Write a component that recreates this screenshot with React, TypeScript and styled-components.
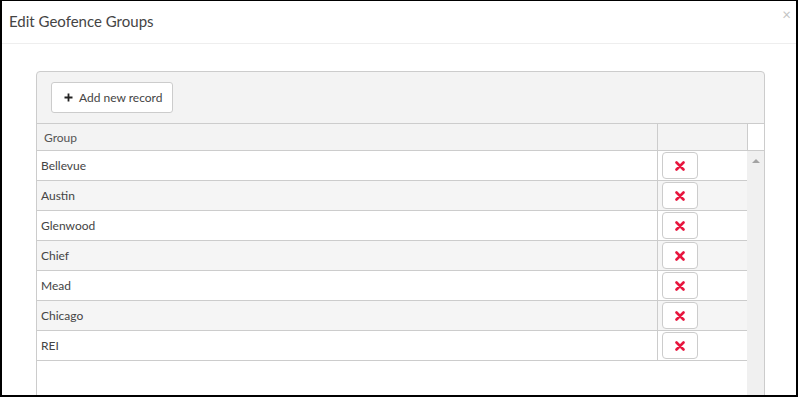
import React from "react";
import styled, { createGlobalStyle } from "styled-components";

const GlobalStyle = createGlobalStyle`
  html, body {
    margin: 0;
    padding: 0;
    background: #fff;
  }
  * {
    box-sizing: border-box;
  }
`;

const Window = styled.div`
  width: 798px;
  height: 397px;
  border: 2px solid #000;
  border-top-width: 1px;
  background: #fff;
  overflow: hidden;
  font-family: Lato, "Liberation Sans", sans-serif;
  color: #333;
`;

const Header = styled.div`
  display: flex;
  align-items: center;
  justify-content: space-between;
  height: 43px;
  padding: 0 5px 2px 7px;
  border-bottom: 1px solid #eeeeee;
`;

const Title = styled.h1`
  margin: 0;
  font-size: 15px;
  font-weight: 400;
  color: #444;
`;

const Close = styled.span`
  font-size: 15px;
  line-height: 1;
  color: #c4c4c4;
  margin-top: -14px;
`;

const Body = styled.div`
  padding: 27px 31px 0 34px;
`;

const Grid = styled.div`
  border: 1px solid #cccccc;
  border-radius: 4px;
  background: #f3f3f3;
  height: 340px;
  overflow: hidden;
`;

const Toolbar = styled.div`
  display: flex;
  padding: 10px 14px;
  border-bottom: 1px solid #cccccc;
`;

const ToolButton = styled.button`
  display: flex;
  align-items: center;
  gap: 6px;
  height: 31px;
  padding: 0 10px 0 12px;
  border: 1px solid #cccccc;
  border-radius: 3px;
  background: #fff;
  font-family: inherit;
  font-size: 12px;
  color: #444;
`;

const HeadRow = styled.div`
  display: flex;
  height: 27px;
  border-bottom: 1px solid #cccccc;
`;

const HeadCell = styled.div<{ $width?: number }>`
  display: flex;
  align-items: center;
  padding-left: 7px;
  font-size: 12px;
  color: #555;
  ${(p) => (p.$width ? `width: ${p.$width}px;` : "flex: 1;")}
  border-right: 1px solid #cccccc;
`;

const ScrollHead = styled.div`
  width: 16px;
  background: #fff;
`;

const Content = styled.div`
  display: flex;
  height: 100%;
  background: #fff;
`;

const Rows = styled.div`
  flex: 1;
`;

const Row = styled.div<{ $alt: boolean }>`
  display: flex;
  height: 30px;
  border-bottom: 1px solid #cccccc;
  background: ${(p) => (p.$alt ? "#f5f5f5" : "#fff")};
`;

const NameCell = styled.div`
  flex: 1;
  display: flex;
  align-items: center;
  padding: 0 0 1px 4px;
  border-right: 1px solid #cccccc;
  font-size: 12px;
  color: #444;
`;

const CommandCell = styled.div`
  width: 89px;
  display: flex;
  align-items: center;
  padding-left: 4px;
`;

const DeleteButton = styled.button`
  width: 36px;
  height: 27px;
  display: flex;
  align-items: center;
  justify-content: center;
  padding: 0;
  border: 1px solid #cccccc;
  border-radius: 4px;
  background: #fff;
`;

const Scrollbar = styled.div`
  width: 17px;
  background: #f0f0f0;
  display: flex;
  justify-content: center;
  padding-top: 8px;
`;

const UpArrow = styled.div`
  width: 0;
  height: 0;
  border-left: 4px solid transparent;
  border-right: 4px solid transparent;
  border-bottom: 4px solid #a3a3a3;
`;

const groups = ["Bellevue", "Austin", "Glenwood", "Chief", "Mead", "Chicago", "REI"];

const PlusIcon = () => (
  <svg width="9" height="9" viewBox="0 0 9 9">
    <path d="M4.5 0.5v8M0.5 4.5h8" stroke="#222" strokeWidth="1.8" />
  </svg>
);

const CrossIcon = () => (
  <svg width="10" height="10" viewBox="0 0 10 10">
    <path d="M1.5 1.5l7 7M8.5 1.5l-7 7" stroke="#e8163f" strokeWidth="2.6" strokeLinecap="round" />
  </svg>
);

export default function App() {
  return (
    <>
      <GlobalStyle />
      <Window>
        <Header>
          <Title>Edit Geofence Groups</Title>
          <Close>×</Close>
        </Header>
        <Body>
          <Grid>
            <Toolbar>
              <ToolButton>
                <PlusIcon />
                Add new record
              </ToolButton>
            </Toolbar>
            <HeadRow>
              <HeadCell>Group</HeadCell>
              <HeadCell $width={90} />
              <ScrollHead />
            </HeadRow>
            <Content>
              <Rows>
                {groups.map((g, i) => (
                  <Row key={g} $alt={i % 2 === 1}>
                    <NameCell>{g}</NameCell>
                    <CommandCell>
                      <DeleteButton>
                        <CrossIcon />
                      </DeleteButton>
                    </CommandCell>
                  </Row>
                ))}
              </Rows>
              <Scrollbar>
                <UpArrow />
              </Scrollbar>
            </Content>
          </Grid>
        </Body>
      </Window>
    </>
  );
}
